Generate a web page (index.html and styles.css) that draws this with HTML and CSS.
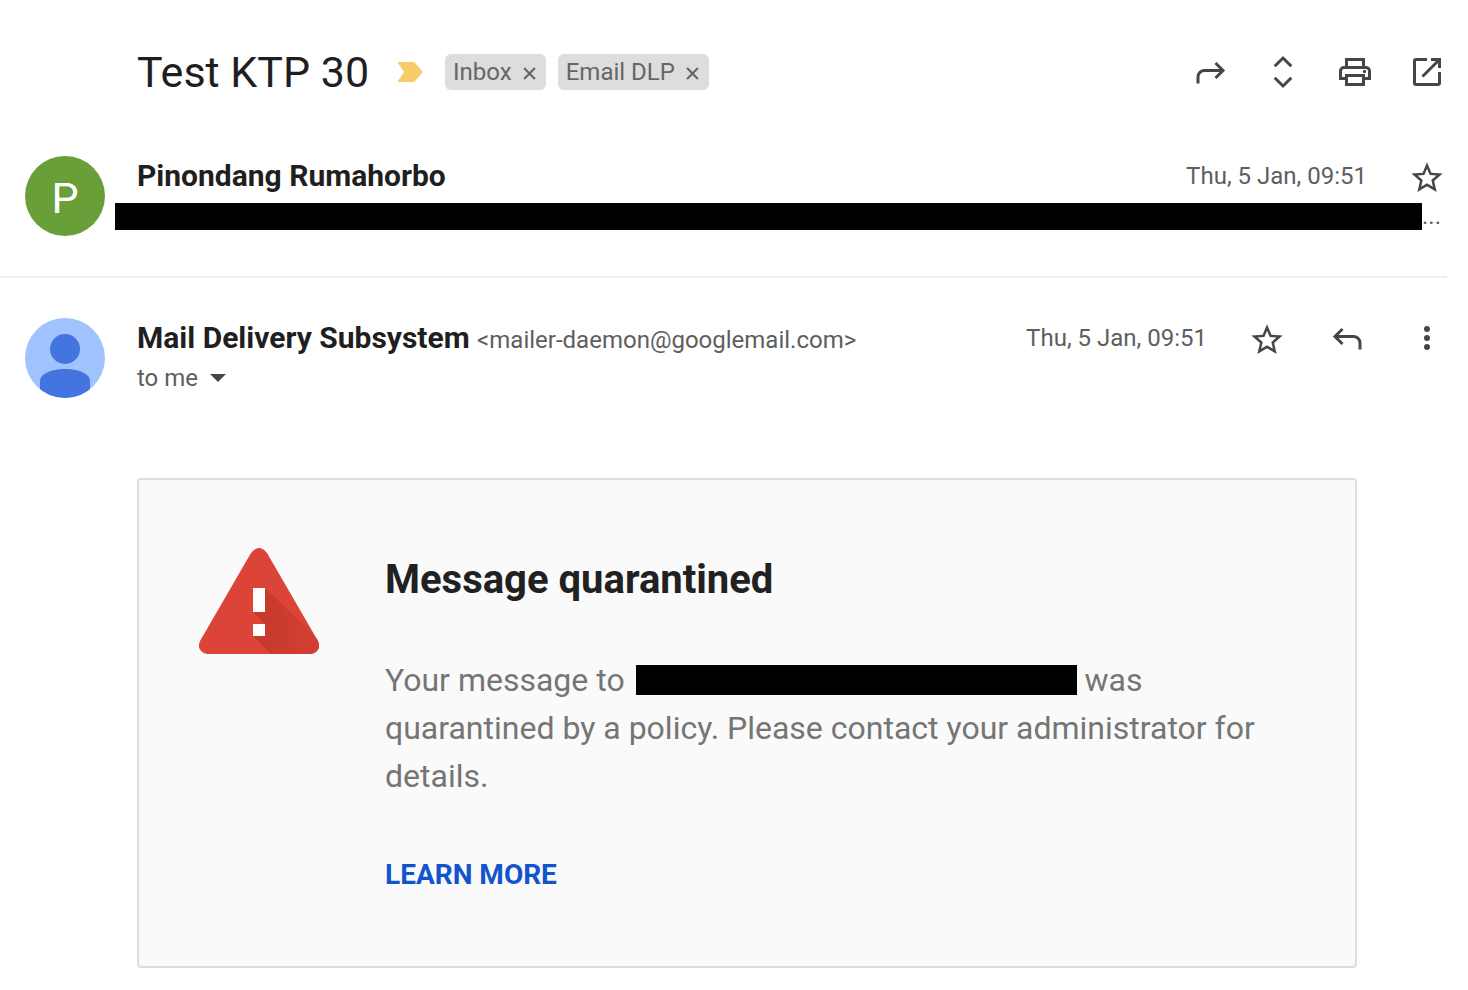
FILE: index.html
```html
<!DOCTYPE html>
<html lang="en">

<head>
    <meta charset="UTF-8">
    <meta name="viewport" content="width=device-width, initial-scale=1.0">
    <title>Test KTP 30</title>
    <link rel="stylesheet" href="styles.css">
</head>

<body>
    <main class="thread">
        <header class="thread-header">
            <h1 class="subject">Test KTP 30</h1>
            <svg class="important" viewBox="0 0 26 20" aria-hidden="true"><path d="M1 0h15q2 0 3 2l6 7q1 1 0 2l-6 7q-1 2-3 2H1q-1 0 0-1l6-9-6-9q-1-1 0-1z"/></svg>
            <div class="labels">
                <span class="label">Inbox
                    <button type="button" aria-label="Remove label Inbox"><svg viewBox="0 0 12 12"><path d="M1 1l10 10M11 1L1 11"/></svg></button>
                </span>
                <span class="label">Email DLP
                    <button type="button" aria-label="Remove label Email DLP"><svg viewBox="0 0 12 12"><path d="M1 1l10 10M11 1L1 11"/></svg></button>
                </span>
            </div>
            <div class="toolbar">
                <button type="button" class="icon-btn" aria-label="Forward all">
                    <svg viewBox="0 0 40 40"><path d="M7 31.500V25a6.500 6.500 0 0 1 6.500-6.500H31M24.500 11l7.500 7.500-7.500 7.500"/></svg>
                </button>
                <button type="button" class="icon-btn" aria-label="Expand all">
                    <svg viewBox="0 0 40 40"><path d="M11.700 14.200L20 6l8.300 8.200M11.700 25.800L20 34l8.300-8.200"/></svg>
                </button>
                <button type="button" class="icon-btn" aria-label="Print all">
                    <svg viewBox="0 0 40 40"><path d="M11.500 15V7.500h17V15M11.500 26.500h-6V19a3.500 3.500 0 0 1 3.500-3.500h22a3.500 3.500 0 0 1 3.500 3.500v7.500h-6M11.500 23.500h17v9h-17z"/><circle class="solid" cx="29.500" cy="19.500" r="1.700"/></svg>
                </button>
                <button type="button" class="icon-btn" aria-label="In new window">
                    <svg viewBox="0 0 40 40"><path d="M20 7.500H9A1.500 1.500 0 0 0 7.500 9v22A1.500 1.500 0 0 0 9 32.500h22a1.500 1.500 0 0 0 1.500-1.500V20M24 7.500h8.500V16M32 8L15.500 24.500"/></svg>
                </button>
            </div>
        </header>

        <article class="message">
            <div class="avatar avatar-letter">P</div>
            <div class="message-body">
                <div class="message-top">
                    <h2 class="sender">Pinondang Rumahorbo</h2>
                    <time class="date">Thu, 5 Jan, 09:51</time>
                    <button type="button" class="icon-btn" aria-label="Star">
                        <svg viewBox="0 0 40 40"><path class="solid" transform="translate(1.300 3.200) scale(1.560)" d="M22 9.240l-7.190-.62L12 2 9.190 8.630 2 9.240l5.460 4.730L5.820 21 12 17.270 18.180 21l-1.630-7.030L22 9.240zM12 15.400l-3.760 2.270 1-4.280-3.320-2.880 4.380-.38L12 6.100l1.710 4.040 4.380.38-3.320 2.880 1 4.280L12 15.400z"/></svg>
                    </button>
                </div>
                <div class="snippet"><span class="redacted"></span>...</div>
            </div>
        </article>

        <article class="message">
            <svg class="avatar" viewBox="0 0 80 80" role="img" aria-label="Profile picture">
                <clipPath id="round"><circle cx="40" cy="40" r="40"/></clipPath>
                <g clip-path="url(#round)">
                    <path fill="#a0c2ff" d="M0 0h80v80H0z"/>
                    <circle fill="#4374e0" cx="40" cy="31" r="15"/>
                    <path fill="#4374e0" d="M15 80V63c0-7 11-12 25-12s25 5 25 12v17z"/>
                </g>
            </svg>
            <div class="message-body">
                <div class="message-top">
                    <h2 class="sender">Mail Delivery Subsystem <span class="address">&lt;mailer-daemon@googlemail.com&gt;</span></h2>
                    <time class="date">Thu, 5 Jan, 09:51</time>
                    <button type="button" class="icon-btn" aria-label="Star">
                        <svg viewBox="0 0 40 40"><path class="solid" transform="translate(1.300 3.200) scale(1.560)" d="M22 9.240l-7.190-.62L12 2 9.190 8.630 2 9.240l5.460 4.730L5.820 21 12 17.270 18.180 21l-1.630-7.030L22 9.240zM12 15.400l-3.760 2.270 1-4.280-3.320-2.880 4.380-.38L12 6.100l1.710 4.040 4.380.38-3.320 2.880 1 4.280L12 15.400z"/></svg>
                    </button>
                    <button type="button" class="icon-btn" aria-label="Reply">
                        <svg viewBox="0 0 40 40"><path d="M33 31.500V25a6.500 6.500 0 0 0-6.500-6.500H9M15.500 11L8 18.500l7.500 7.500"/></svg>
                    </button>
                    <button type="button" class="icon-btn" aria-label="More">
                        <svg viewBox="0 0 40 40"><g class="solid"><circle cx="20" cy="11" r="3"/><circle cx="20" cy="20" r="3"/><circle cx="20" cy="29" r="3"/></g></svg>
                    </button>
                </div>
                <button type="button" class="recipients">to me <svg viewBox="0 0 16 8" aria-hidden="true"><path d="M0 0h16L8 8z"/></svg></button>

                <section class="notice">
                    <svg class="warning" viewBox="0 0 120 106" aria-hidden="true">
                        <defs>
                            <linearGradient id="shade" x1="0" x2="1">
                                <stop offset="0" stop-color="#c53929"/>
                                <stop offset="1" stop-color="#d34033"/>
                            </linearGradient>
                            <clipPath id="triangle"><path d="M52 5q8-10 16 0l51 88q4 10-7 13H8q-11-3-7-13z"/></clipPath>
                        </defs>
                        <g clip-path="url(#triangle)">
                            <path fill="#db4437" d="M0 0h120v106H0z"/>
                            <path fill="url(#shade)" d="M66 40l54 52v14H72L54 88l12-12-12-12z"/>
                        </g>
                        <path fill="#fff" d="M54 40h12v24H54zM54 76h12v12H54z"/>
                    </svg>
                    <div class="notice-text">
                        <h3>Message quarantined</h3>
                        <p>Your message to <span class="redacted redacted-inline"></span> was quarantined by a policy. Please contact your administrator for details.</p>
                        <a href="#">LEARN MORE</a>
                    </div>
                </section>
            </div>
        </article>
    </main>
</body>

</html>
```
FILE: styles.css
```css
* {
  margin: 0;
  padding: 0;
  box-sizing: border-box;
}

body {
  background-color: #fff;
  color: #202124;
  font-family: Roboto, "Liberation Sans", sans-serif;
}

button {
  border: 0;
  background: none;
  font: inherit;
  color: inherit;
  cursor: pointer;
}

.thread {
  margin-right: 21px;
}

/* Subject row */
.thread-header {
  display: flex;
  align-items: center;
  padding: 44px 0 0 137px;
}

.subject {
  font-size: 43px;
  line-height: 56px;
  font-weight: 400;
  color: #1f1f1f;
}

.important {
  width: 26px;
  height: 20px;
  margin: 0 22px 0 28px;
  fill: #f7cb69;
}

.labels {
  display: flex;
  gap: 12px;
}

.label {
  display: flex;
  align-items: center;
  gap: 11px;
  height: 36px;
  padding: 0 10px 0 8px;
  border-radius: 6px;
  background-color: #ddd;
  color: #666;
  font-size: 24px;
}

.label button {
  display: flex;
  padding-top: 2px;
}

.label svg {
  width: 13px;
  height: 13px;
  stroke: #666;
  stroke-width: 2;
}

.toolbar {
  display: flex;
  gap: 32px;
  margin-left: auto;
}

.icon-btn {
  flex: none;
  width: 40px;
  height: 40px;
}

.icon-btn svg {
  display: block;
  fill: none;
  stroke: #444746;
  stroke-width: 3;
}

.icon-btn .solid {
  fill: #444746;
  stroke: none;
}

/* Messages */
.message {
  display: flex;
  gap: 32px;
  padding: 40px 0 0 25px;
}

.message:first-of-type {
  padding: 56px 0 40px 25px;
  border-bottom: 2px solid #eee;
}

.avatar {
  flex: none;
  width: 80px;
  height: 80px;
}

.avatar-letter {
  border-radius: 50%;
  background-color: #689f38;
  color: #fff;
  font-size: 43px;
  line-height: 84px;
  text-align: center;
}

.message-body {
  flex: 1;
  min-width: 0;
}

.message-top {
  display: flex;
  align-items: center;
  gap: 40px;
}

.sender {
  flex: 1;
  font-size: 30px;
  line-height: 40px;
  font-weight: 700;
  color: #1f1f1f;
}

.address {
  font-size: 24px;
  line-height: 24px;
  font-weight: 400;
  color: #5e5e5e;
}

.date {
  font-size: 24px;
  color: #5e5e5e;
}

.snippet {
  display: flex;
  align-items: center;
  height: 40px;
  margin-left: -22px;
  padding-right: 6px;
  color: #5e5e5e;
  font-size: 24px;
}

.redacted {
  flex: 1;
  height: 27px;
  background-color: #000;
}

.recipients {
  display: flex;
  align-items: center;
  gap: 12px;
  height: 40px;
  color: #5e5e5e;
  font-size: 24px;
}

.recipients svg {
  width: 16px;
  height: 8px;
  fill: #444746;
}

/* Quarantine notice */
.notice {
  display: flex;
  align-items: flex-start;
  gap: 66px;
  margin: 80px 90px 22px 0;
  padding: 68px 58px 72px 60px;
  border: 2px solid #ddd;
  border-radius: 4px;
  background-color: #fafafa;
}

.warning {
  flex: none;
  width: 120px;
  height: 106px;
}

.notice-text h3 {
  margin-bottom: 44px;
  color: #212121;
  font-size: 40px;
  line-height: 64px;
}

.notice-text p {
  margin-bottom: 56px;
  color: #757575;
  font-size: 32px;
  line-height: 48px;
}

.redacted-inline {
  display: inline-block;
  width: 441px;
  height: 30px;
  margin-left: 3px;
  vertical-align: -4px;
}

.notice-text a {
  display: inline-block;
  color: #15c;
  font-size: 28px;
  line-height: 38px;
  font-weight: 700;
  text-decoration: none;
}
```
